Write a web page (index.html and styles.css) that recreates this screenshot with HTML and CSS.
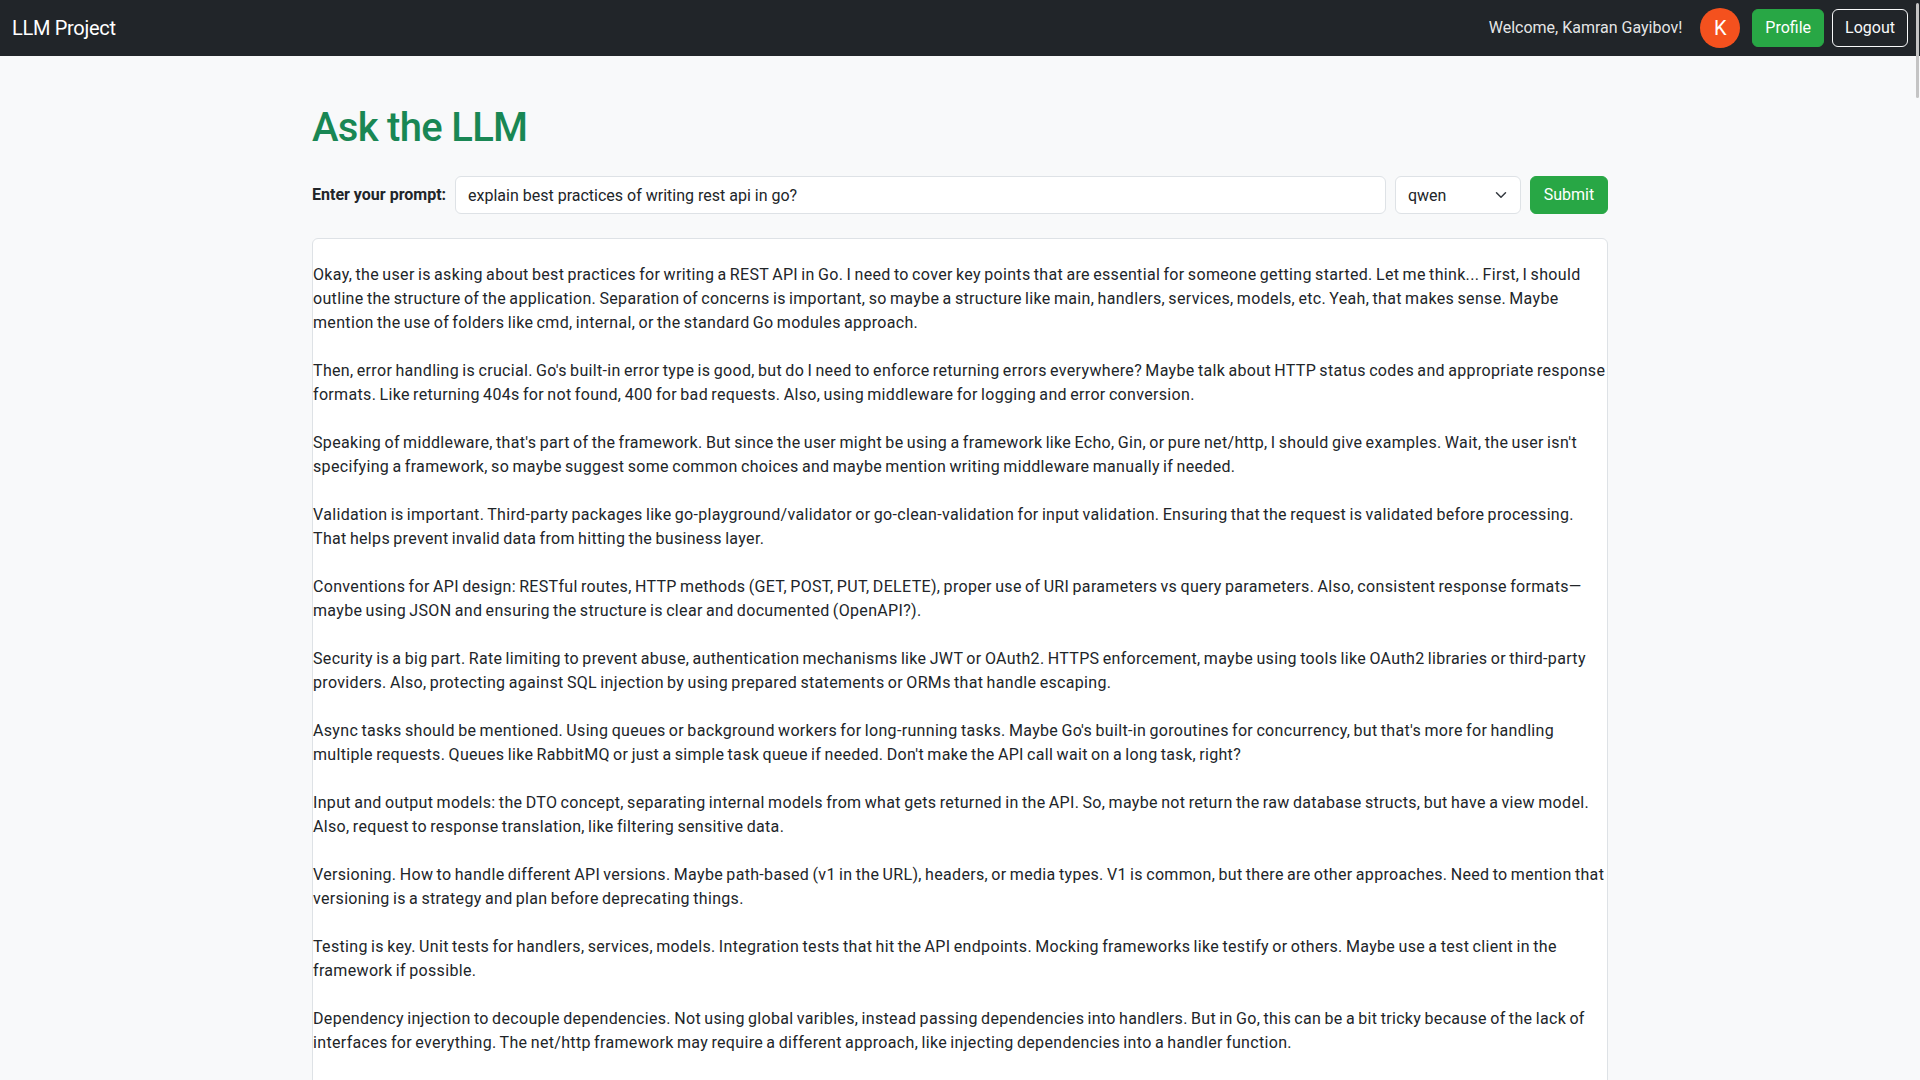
FILE: index.html
```html
<!DOCTYPE html>
<html lang="en">
<head>
<meta charset="utf-8">
<title>LLM Project</title>
<link rel="stylesheet" href="styles.css">
</head>
<body>
<nav class="navbar">
  <a class="brand" href="#">LLM Project</a>
  <div class="nav-right">
    <span class="welcome">Welcome, Kamran Gayibov!</span>
    <span class="avatar">K</span>
    <a class="btn btn-success" href="#">Profile</a>
    <a class="btn btn-outline" href="#">Logout</a>
  </div>
</nav>
<main class="container">
  <h1 class="title">Ask the LLM</h1>
  <form class="prompt-form">
    <label class="prompt-label" for="prompt">Enter your prompt:</label>
    <input id="prompt" class="prompt-input" type="text" value="explain best practices of writing rest api in go?">
    <div class="select-wrap">
      <select class="model-select"><option>qwen</option></select>
      <svg class="chevron" width="16" height="12" viewBox="0 0 16 16"><path d="M2 5l6 6 6-6" fill="none" stroke="#343a40" stroke-width="2" stroke-linecap="round" stroke-linejoin="round"/></svg>
    </div>
    <button type="button" class="btn btn-success btn-submit">Submit</button>
  </form>
  <div class="response">&#10;Okay, the user is asking about best practices for writing a REST API in Go. I need to cover key points that are essential for someone getting started. Let me think... First, I should outline the structure of the application. Separation of concerns is important, so maybe a structure like main, handlers, services, models, etc. Yeah, that makes sense. Maybe mention the use of folders like cmd, internal, or the standard Go modules approach.

Then, error handling is crucial. Go's built-in error type is good, but do I need to enforce returning errors everywhere? Maybe talk about HTTP status codes and appropriate response formats. Like returning 404s for not found, 400 for bad requests. Also, using middleware for logging and error conversion.

Speaking of middleware, that's part of the framework. But since the user might be using a framework like Echo, Gin, or pure net/http, I should give examples. Wait, the user isn't specifying a framework, so maybe suggest some common choices and maybe mention writing middleware manually if needed.

Validation is important. Third-party packages like go-playground/validator or go-clean-validation for input validation. Ensuring that the request is validated before processing. That helps prevent invalid data from hitting the business layer.

Conventions for API design: RESTful routes, HTTP methods (GET, POST, PUT, DELETE), proper use of URI parameters vs query parameters. Also, consistent response formats—maybe using JSON and ensuring the structure is clear and documented (OpenAPI?).

Security is a big part. Rate limiting to prevent abuse, authentication mechanisms like JWT or OAuth2. HTTPS enforcement, maybe using tools like OAuth2 libraries or third-party providers. Also, protecting against SQL injection by using prepared statements or ORMs that handle escaping.

Async tasks should be mentioned. Using queues or background workers for long-running tasks. Maybe Go's built-in goroutines for concurrency, but that's more for handling multiple requests. Queues like RabbitMQ or just a simple task queue if needed. Don't make the API call wait on a long task, right?

Input and output models: the DTO concept, separating internal models from what gets returned in the API. So, maybe not return the raw database structs, but have a view model. Also, request to response translation, like filtering sensitive data.

Versioning. How to handle different API versions. Maybe path-based (v1 in the URL), headers, or media types. V1 is common, but there are other approaches. Need to mention that versioning is a strategy and plan before deprecating things.

Testing is key. Unit tests for handlers, services, models. Integration tests that hit the API endpoints. Mocking frameworks like testify or others. Maybe use a test client in the framework if possible.

Dependency injection to decouple dependencies. Not using global varibles, instead passing dependencies into handlers. But in Go, this can be a bit tricky because of the lack of interfaces for everything. The net/http framework may require a different approach, like injecting dependencies into a handler function.
</div>
</main>
<div class="scroll-thumb"></div>
</body>
</html>
```
FILE: styles.css
```css
html {
  scrollbar-width: none;
}
html::-webkit-scrollbar {
  display: none;
}
* {
  box-sizing: border-box;
}
body {
  margin: 0;
  background: #f8f9fa;
  color: #212529;
  font-family: Roboto, "Noto Sans", sans-serif;
  font-size: 16px;
  line-height: 1.5;
}
.navbar {
  height: 56px;
  background: #212529;
  display: flex;
  align-items: center;
  justify-content: space-between;
  padding: 0 12px;
}
.brand {
  color: #fff;
  text-decoration: none;
  font-size: 20px;
  line-height: 30px;
  letter-spacing: -0.3px;
}
.nav-right {
  display: flex;
  align-items: center;
}
.welcome {
  color: rgba(255, 255, 255, 0.9);
  margin-right: 18px;
}
.avatar {
  width: 40px;
  height: 40px;
  border-radius: 50%;
  background: #f4511e;
  color: #fff;
  font-size: 20px;
  display: flex;
  align-items: center;
  justify-content: center;
  margin-right: 12px;
}
.btn {
  display: inline-block;
  height: 38px;
  padding: 6px 12px;
  border-radius: 6px;
  border: 1px solid transparent;
  font-family: inherit;
  font-size: 16px;
  line-height: 24px;
  text-decoration: none;
  text-align: center;
  cursor: pointer;
}
.btn-success {
  background: #28a745;
  border-color: #28a745;
  color: #fff;
}
.btn-outline {
  color: #f8f9fa;
  border-color: #f8f9fa;
  margin-left: 8px;
}
.container {
  max-width: 1320px;
  margin: 0 auto;
  padding: 48px 12px 0;
}
.title {
  margin: 0 0 24px;
  color: #198754;
  font-size: 40px;
  font-weight: 500;
  line-height: 1.2;
  letter-spacing: -0.7px;
}
.prompt-form {
  display: flex;
  align-items: center;
  gap: 9px;
  margin-bottom: 24px;
}
.prompt-label {
  font-weight: 700;
  white-space: nowrap;
}
.prompt-input {
  flex: 1;
  min-width: 0;
  height: 38px;
  padding: 6px 12px;
  border: 1px solid #dee2e6;
  border-radius: 6px;
  background: #fff;
  color: #212529;
  font-family: inherit;
  font-size: 16px;
}
.select-wrap {
  position: relative;
  width: 126px;
}
.model-select {
  appearance: none;
  -webkit-appearance: none;
  display: block;
  width: 100%;
  height: 38px;
  padding: 6px 36px 6px 12px;
  border: 1px solid #dee2e6;
  border-radius: 6px;
  background: #fff;
  color: #212529;
  font-family: inherit;
  font-size: 16px;
}
.chevron {
  position: absolute;
  right: 12px;
  top: 13px;
  pointer-events: none;
}
.btn-submit {
  width: 78px;
  padding: 6px 0;
}
.response {
  background: #fff;
  border: 1px solid #dee2e6;
  border-radius: 6px;
  white-space: pre-wrap;
  letter-spacing: 0.33px;
  word-spacing: -1px;
  min-height: 900px;
}
.scroll-thumb {
  position: fixed;
  top: 3px;
  right: 1px;
  width: 3px;
  height: 95px;
  border-radius: 2px;
  background: #c4c4c4;
}
```
